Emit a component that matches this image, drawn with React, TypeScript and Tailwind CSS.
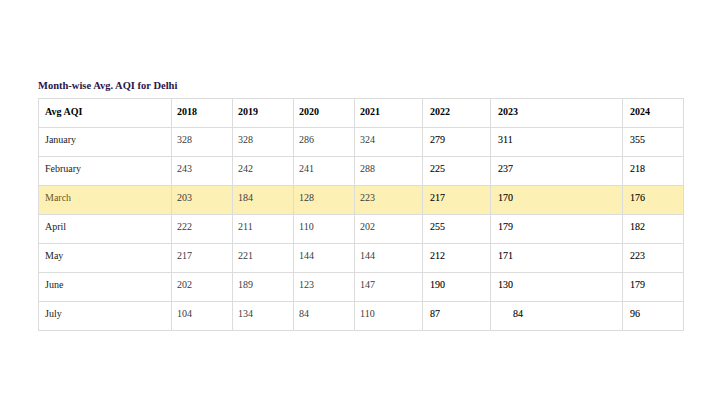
const years = ['2018', '2019', '2020', '2021', '2022', '2023', '2024'];
const widths = ['w-[133px]', 'w-[61px]', 'w-[61px]', 'w-[61px]', 'w-[68px]', 'w-[68px]', 'w-[132px]', 'w-[61px]'];

const rows: { month: string; values: string[]; highlight?: boolean }[] = [
    { month: 'January', values: ['328', '328', '286', '324', '279', '311', '355'] },
    { month: 'February', values: ['243', '242', '241', '288', '225', '237', '218'] },
    { month: 'March', values: ['203', '184', '128', '223', '217', '170', '176'], highlight: true },
    { month: 'April', values: ['222', '211', '110', '202', '255', '179', '182'] },
    { month: 'May', values: ['217', '221', '144', '144', '212', '171', '223'] },
    { month: 'June', values: ['202', '189', '123', '147', '190', '130', '179'] },
    { month: 'July', values: ['104', '134', '84', '110', '87', '84', '96'] },
];

export default function App() {
    return (
        <div
            className="w-[720px] h-[405px] bg-white pt-[79px] pl-[38px]"
            style={{ fontFamily: '"Liberation Serif", "Times New Roman", serif' }}
        >
            {/* Title */}
            <h2 className="text-[10.5px] font-bold text-[#2a1648] leading-[14px] mb-[5px]">
                Month-wise Avg. AQI for Delhi
            </h2>

            {/* Table */}
            <table className="border-collapse table-fixed w-[645px] text-[10px]">
                <thead>
                    <tr className="h-[29px]">
                        <th className={`${widths[0]} border border-[#dcdcdc] text-left font-bold pl-[6px] pb-[4px] text-black`}>
                            Avg AQI
                        </th>
                        {years.map((y, i) => (
                            <th
                                key={y}
                                className={`${widths[i + 1]} border border-[#dcdcdc] text-left font-bold text-black pb-[4px] ${i >= 4 ? 'pl-[7px]' : 'pl-[5px]'}`}
                            >
                                {y}
                            </th>
                        ))}
                    </tr>
                </thead>
                <tbody>
                    {rows.map((r) => (
                        <tr key={r.month} className={`h-[29px] ${r.highlight ? 'bg-[#fdf0b5]' : ''}`}>
                            <td className={`border border-[#dcdcdc] pl-[6px] pb-[5px] ${r.highlight ? 'text-[#6b5a2a]' : 'text-[#222]'}`}>
                                {r.month}
                            </td>
                            {r.values.map((v, i) => (
                                <td
                                    key={i}
                                    className={`border border-[#dcdcdc] pb-[5px] ${i >= 4 ? 'pl-[7px] text-black [-webkit-text-stroke:0.1px_black]' : 'pl-[5px] text-[#3a3a3a]'} ${r.month === 'July' && i === 5 ? 'pl-[22px]' : ''}`}
                                >
                                    {v}
                                </td>
                            ))}
                        </tr>
                    ))}
                </tbody>
            </table>
        </div>
    );
}
